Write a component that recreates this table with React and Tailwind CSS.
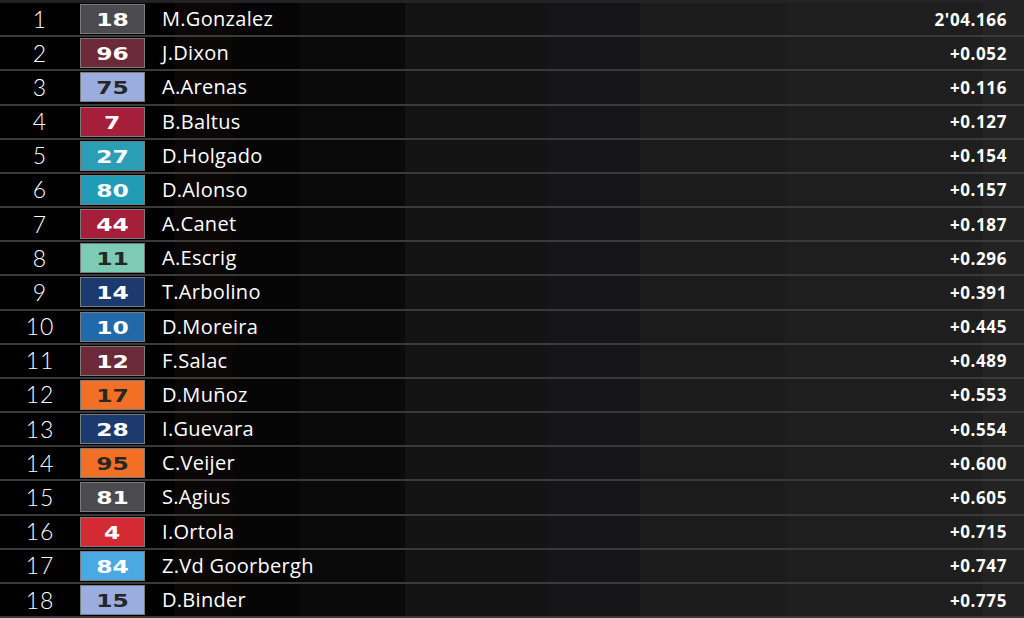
import React from "react";

const rows = [
  { pos: 1, num: "18", name: "M.Gonzalez", time: "2'04.166", bg: "bg-[#4b4b4d]", fg: "text-white" },
  { pos: 2, num: "96", name: "J.Dixon", time: "+0.052", bg: "bg-[#6c2937]", fg: "text-white" },
  { pos: 3, num: "75", name: "A.Arenas", time: "+0.116", bg: "bg-[#9badde]", fg: "text-[#262626]" },
  { pos: 4, num: "7", name: "B.Baltus", time: "+0.127", bg: "bg-[#a51f3a]", fg: "text-white" },
  { pos: 5, num: "27", name: "D.Holgado", time: "+0.154", bg: "bg-[#2b9db5]", fg: "text-white" },
  { pos: 6, num: "80", name: "D.Alonso", time: "+0.157", bg: "bg-[#209cb6]", fg: "text-white" },
  { pos: 7, num: "44", name: "A.Canet", time: "+0.187", bg: "bg-[#a51f3a]", fg: "text-white" },
  { pos: 8, num: "11", name: "A.Escrig", time: "+0.296", bg: "bg-[#7dcbb5]", fg: "text-[#262626]" },
  { pos: 9, num: "14", name: "T.Arbolino", time: "+0.391", bg: "bg-[#1c3a6d]", fg: "text-white" },
  { pos: 10, num: "10", name: "D.Moreira", time: "+0.445", bg: "bg-[#2169a8]", fg: "text-white" },
  { pos: 11, num: "12", name: "F.Salac", time: "+0.489", bg: "bg-[#6c2937]", fg: "text-white" },
  { pos: 12, num: "17", name: "D.Muñoz", time: "+0.553", bg: "bg-[#f26f25]", fg: "text-[#262626]" },
  { pos: 13, num: "28", name: "I.Guevara", time: "+0.554", bg: "bg-[#1c3a6d]", fg: "text-white" },
  { pos: 14, num: "95", name: "C.Veijer", time: "+0.600", bg: "bg-[#f26f25]", fg: "text-[#262626]" },
  { pos: 15, num: "81", name: "S.Agius", time: "+0.605", bg: "bg-[#4b4b4d]", fg: "text-white" },
  { pos: 16, num: "4", name: "I.Ortola", time: "+0.715", bg: "bg-[#d42a34]", fg: "text-white" },
  { pos: 17, num: "84", name: "Z.Vd Goorbergh", time: "+0.747", bg: "bg-[#4aa9e1]", fg: "text-white" },
  { pos: 18, num: "15", name: "D.Binder", time: "+0.775", bg: "bg-[#9badde]", fg: "text-[#262626]" },
];

export default function App() {
  return (
    <div className="w-[1024px] h-[618px] overflow-hidden border-t-[3px] border-[#232326] flex flex-col bg-[linear-gradient(to_right,#000_0px,#000_175px,#0c0707_175px,#0c0707_233px,#050505_233px,#050505_300px,#0a0a0a_300px,#0a0a0a_405px,#131313_405px,#131313_545px,#151517_545px,#151517_640px,#1b1b1b_640px,#1b1b1b_785px,#1e1e1e_785px,#1e1e1e_983px,#232323_983px)]">
      {rows.map((r) => (
        <div
          key={r.pos}
          className="flex-1 flex items-center border-b-2 border-[#3a3a3a]"
        >
          <div className="w-[80px] text-center text-white text-[23px] font-light tracking-[1px] font-['Lato',sans-serif] leading-none">
            {r.pos}
          </div>
          <div
            className={`w-[65px] h-[30px] flex items-center justify-center pt-[2px] border border-[#7a7a7a] ${r.bg} ${r.fg}`}
          >
            <span className="inline-block scale-x-[1.3] text-[18px] font-bold font-['DejaVu_Sans',sans-serif] leading-none">
              {r.num}
            </span>
          </div>
          <div className="ml-[17px] flex-1 text-white text-[20px] tracking-[0.3px] font-['Open_Sans',sans-serif] leading-none">
            {r.name}
          </div>
          <div className="pr-[17px] text-white text-[17px] font-bold tracking-[0.6px] font-['Open_Sans',sans-serif] leading-none">
            {r.time}
          </div>
        </div>
      ))}
    </div>
  );
}
